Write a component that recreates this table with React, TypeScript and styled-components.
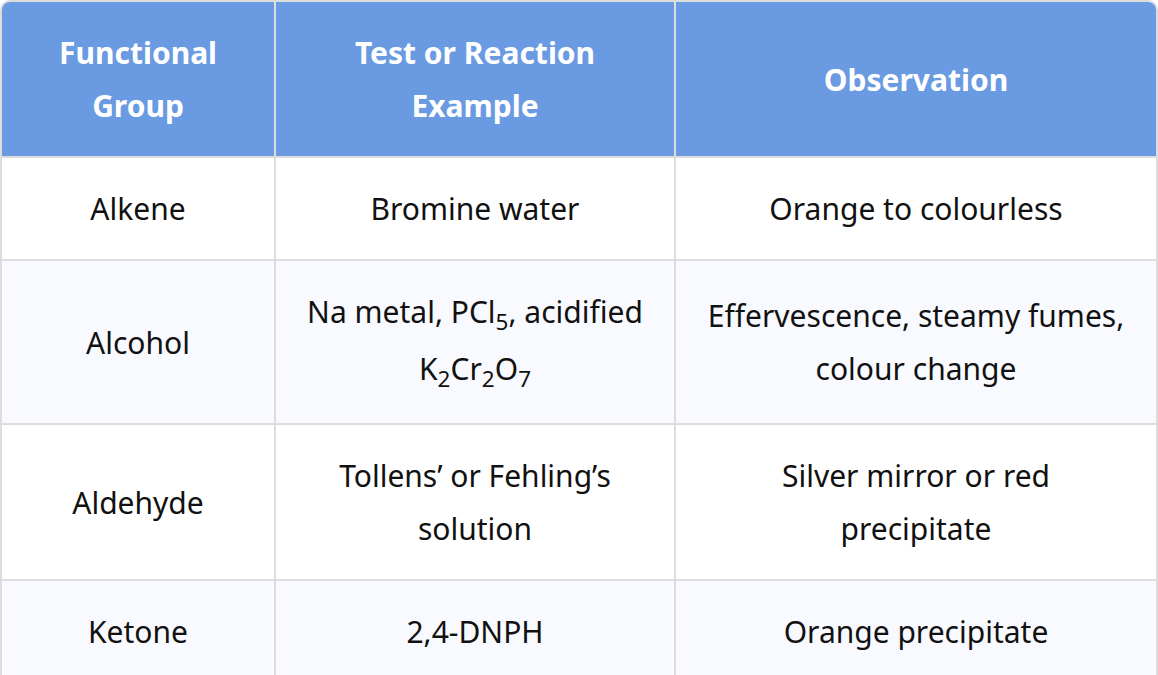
import React from "react";
import styled, { createGlobalStyle } from "styled-components";

const Global = createGlobalStyle`
  html, body { margin: 0; padding: 0; background: #ffffff; }
  body { font-family: "Noto Sans", "Open Sans", sans-serif; }
`;

const Wrap = styled.div`
  width: 1158px;
  border: 2px solid #dddddd;
  border-radius: 10px;
  overflow: hidden;
  box-sizing: border-box;
`;

const Table = styled.table`
  width: 100%;
  border-collapse: collapse;
  table-layout: fixed;
  font-size: 30px;
  line-height: 53px;
  color: #111111;
`;

const Th = styled.th`
  background: #6a9ae2;
  color: #ffffff;
  font-weight: 700;
  padding: 24px 28px;
  text-align: center;
  border: 2px solid #dddddd;
  border-top: none;
  &:first-child { border-left: none; }
  &:last-child { border-right: none; padding: 24px 30px; }
`;

const Tr = styled.tr<{ $alt?: boolean }>`
  background: ${(p) => (p.$alt ? "#f8faff" : "#ffffff")};
`;

const Td = styled.td`
  padding: 24px 28px;
  text-align: center;
  border: 2px solid #dddddd;
  &:first-child { border-left: none; }
  &:last-child { border-right: none; padding: 24px 30px; }
`;

const Sub = styled.sub`
  font-size: 0.75em;
  line-height: 41px;
`;

const rows: { g: string; t: React.ReactNode; o: string }[] = [
  { g: "Alkene", t: "Bromine water", o: "Orange to colourless" },
  {
    g: "Alcohol",
    t: (
      <>
        Na metal, PCl<Sub>5</Sub>, acidified K<Sub>2</Sub>Cr<Sub>2</Sub>O<Sub>7</Sub>
      </>
    ),
    o: "Effervescence, steamy fumes, colour change",
  },
  { g: "Aldehyde", t: "Tollens’ or Fehling’s solution", o: "Silver mirror or red precipitate" },
  { g: "Ketone", t: "2,4-DNPH", o: "Orange precipitate" },
];

export default function App() {
  return (
    <>
      <Global />
      <Wrap>
        <Table>
          <colgroup>
            <col style={{ width: 273 }} />
            <col style={{ width: 400 }} />
            <col />
          </colgroup>
          <thead>
            <tr>
              <Th>Functional Group</Th>
              <Th>Test or Reaction Example</Th>
              <Th>Observation</Th>
            </tr>
          </thead>
          <tbody>
            {rows.map((r, i) => (
              <Tr key={r.g} $alt={i % 2 === 1}>
                <Td>{r.g}</Td>
                <Td>{r.t}</Td>
                <Td>{r.o}</Td>
              </Tr>
            ))}
          </tbody>
        </Table>
      </Wrap>
    </>
  );
}
